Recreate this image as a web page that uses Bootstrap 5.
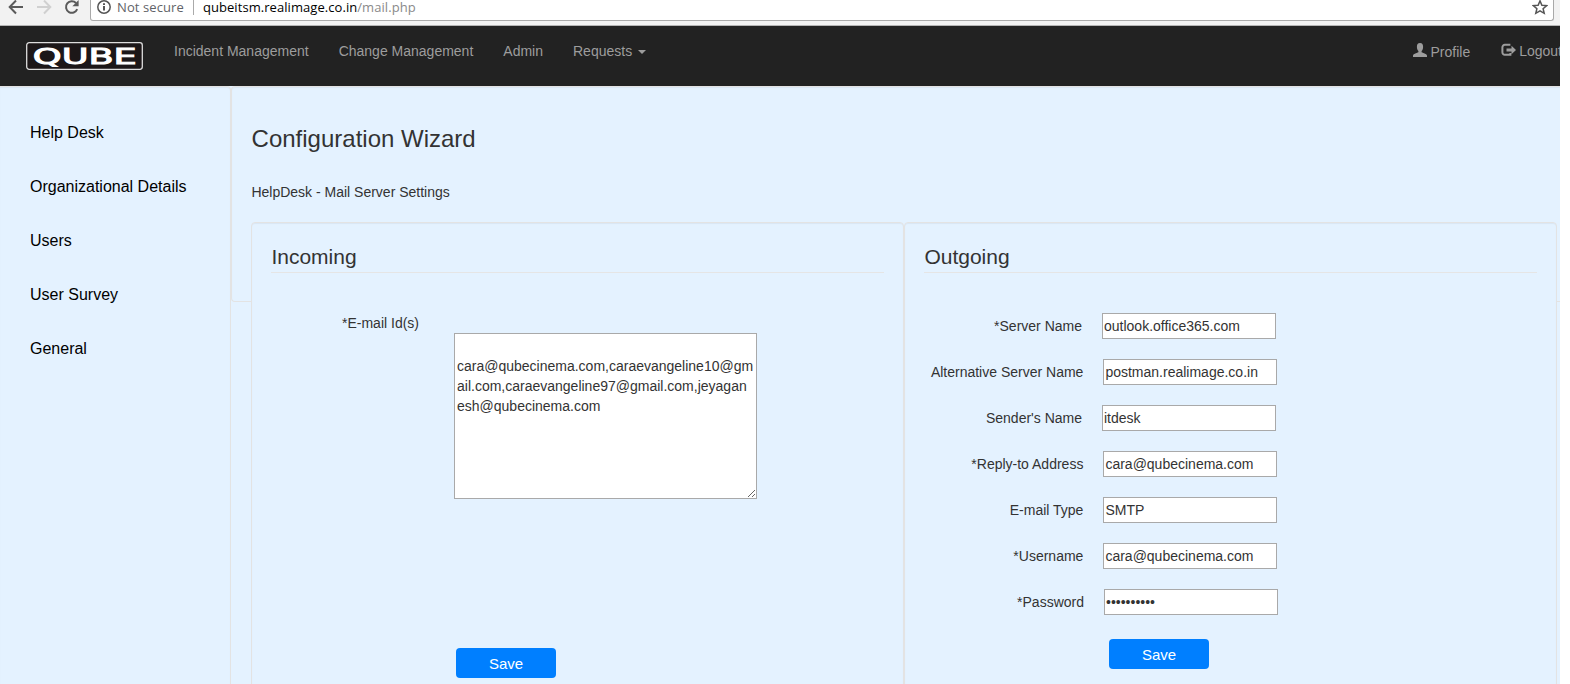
<!DOCTYPE html>
<html lang="en">
<head>
<meta charset="utf-8">
<title>Configuration Wizard</title>
<link rel="stylesheet" href="https://cdn.jsdelivr.net/npm/bootstrap@5.3.0/dist/css/bootstrap.min.css">
<style>
body{font-family:"Liberation Sans",Arial,sans-serif;font-size:14px;line-height:20px;color:#333;background:#fff;overflow:hidden}
.screen{width:1560px;height:684px;background:#e4f2ff}
.browser{height:26px;background:#f2f2f2;border-bottom:1px solid #b5b5b5;font-family:"Open Sans","Noto Sans",sans-serif;font-size:13px}
.tools{width:90px;height:25px}
.omni{width:1464px;height:21px;border:1px solid #a9a9a9;border-top:0;border-radius:0 0 3px 3px;background:#fff;line-height:15px}
.secure{color:#5f6368;letter-spacing:.1px;margin-left:4px}
.sep{width:1px;height:15px;background:#aaa;margin:0 9px 0 9px}
.addr{color:#000;white-space:nowrap;letter-spacing:.06px}
.addr span{color:#8a8a8a}
.star{margin-right:5px}
.topnav{height:60px;background:#222;padding:0 0 0 26px;overflow:hidden}
.topnav .nav-link{color:#9d9d9d;padding:0;line-height:20px;white-space:nowrap}
.topnav .dropdown-toggle::after{border-top:4px solid;border-right:4px solid transparent;border-left:4px solid transparent;margin-left:6px;vertical-align:2px}
.left-nav{margin:15px 0 0 31px;gap:30px}
.right-nav{margin:16px -2px 0 0;gap:31px}
.pro svg{margin:1px 3px 0 0}
.out svg{margin:2px 3px 0 0}
.out{margin-top:-1px}
.side{width:231px;border:1px solid #e3e3e3;border-left:0;border-bottom:0;border-radius:0 4px 0 0;padding:36px 0 0 30px;box-shadow:inset 0 1px 1px rgba(0,0,0,.05)}
.side a{display:block;color:#000;text-decoration:none;font-size:16px;line-height:20px;margin-bottom:34px}
.panel{width:1340px;height:216px;border:1px solid #e3e3e3;border-right:0;border-radius:4px 0 0 4px;padding:0 0 0 19px;box-shadow:inset 0 1px 1px rgba(0,0,0,.05)}
.panel h3{font-size:24px;line-height:28px;margin:38px 0 0;font-weight:400;padding-left:.6px}
.sub{margin:29px 0 0;padding-left:.4px}
.boxes{margin-top:20px;width:1306px}
.box{width:653px;height:480px;flex:none;border:1px solid #e3e3e3;border-radius:4px;background:#e4f2ff;padding:19px;box-shadow:inset 0 1px 1px rgba(0,0,0,.05)}
.box h4{font-size:21px;line-height:30px;height:31px;border-bottom:1px solid #e5e5e5;margin:0;font-weight:400;padding-left:.4px}
.email{margin:40px 0 0 71px}
textarea{width:303px;height:166px;border:1px solid #a9a9a9;padding:2px 0 2px 2px;color:#333;line-height:20px;word-break:break-all;overflow:hidden;display:block;background:#fff}
.email+textarea{margin:0 0 0 183px}
.fields{margin-top:40px}
.field{height:26px;margin-bottom:20px;width:352px}
.field label{margin-right:20px;line-height:26px}
.field input{width:174px;height:26px;flex:none;border:1px solid #a9a9a9;padding:0 1px;color:#333;background:#fff}
.half{width:353.4px}
.last{width:354px}
.save{width:100px;height:30px;padding:0;border:0;border-radius:4px;background:#007fff;color:#fff;font-size:15px;line-height:31px}
.save:hover{background:#0074e8;color:#fff}
.save-in{margin:149px 0 0 185px}
.save-out{margin:24px 0 0 185px}
.field.last{margin-bottom:0}
</style>
</head>
<body>
<div class="screen d-flex flex-column overflow-hidden">
 <div class="browser d-flex flex-shrink-0">
  <div class="tools flex-shrink-0">
   <svg width="90" height="25" viewBox="0 0 90 25" fill="none" stroke-width="2">
    <path d="M23 7H10M16 .5 9.700 7 16 13.500" stroke="#5a5a5a"/>
    <path d="M37 7h13M44 .5 50.300 7 44 13.500" stroke="#d0d0d0"/>
    <path d="M77.200 9.200A5.800 5.800 0 1 1 76 3" stroke="#5a5a5a"/><path d="M78.600 0v6.200h-6.200z" fill="#5a5a5a"/>
   </svg>
  </div>
  <div class="omni d-flex flex-shrink-0">
   <svg class="ms-1" width="18" height="15" viewBox="0 0 18 15"><circle cx="9" cy="7" r="6.200" fill="none" stroke="#555" stroke-width="1.500"/><path d="M8.100 6h1.800v4.600H8.100zM8.100 3.200h1.800v1.700H8.100z" fill="#444"/></svg>
   <span class="secure">Not secure</span><span class="sep"></span>
   <span class="addr">qubeitsm.realimage.co.in<span>/mail.php</span></span>
   <svg class="ms-auto star" width="16" height="16" viewBox="0 0 16 16"><path d="m8 .9 1.900 4.300 4.800.4-3.600 3.100 1.100 4.600L8 10.800l-4.200 2.500 1.100-4.600-3.600-3.100 4.800-.4z" fill="none" stroke="#555" stroke-width="1.500"/></svg>
  </div>
 </div>
 <nav class="topnav d-flex flex-shrink-0">
  <svg class="flex-shrink-0 mt-3" width="117" height="28" viewBox="0 0 117 28">
   <rect x=".7" y=".7" width="115.600" height="26.600" rx="2.500" fill="#1c1718" stroke="#ddd" stroke-width="1.300"/>
   <text x="6.800" y="21.500" textLength="104" lengthAdjust="spacingAndGlyphs" font-family="DejaVu Sans" font-size="22" fill="#fff" stroke="#fff" stroke-width="1">QUBE</text>
  </svg>
  <div class="nav flex-nowrap left-nav">
   <a class="nav-link" href="#">Incident Management</a>
   <a class="nav-link" href="#">Change Management</a>
   <a class="nav-link" href="#">Admin</a>
   <a class="nav-link dropdown-toggle" href="#">Requests</a>
  </div>
  <div class="nav flex-nowrap ms-auto right-nav">
   <a class="nav-link d-flex pro" href="#"><svg width="14" height="14" viewBox="0 0 14 14" fill="#9d9d9d"><path d="M7 0C4.700 0 3.900 1.600 3.900 3.700c0 1.800.5 3.300 1.500 4.300v1.300C3.500 10.300 0 11 0 12.800V14h14v-1.200c0-1.800-3.500-2.500-5.400-3.500V8c1-1 1.500-2.500 1.500-4.300C10.100 1.600 9.300 0 7 0z"/></svg>Profile</a>
   <a class="nav-link d-flex out" href="#"><svg width="15" height="14" viewBox="0 0 15 14"><path d="M9.400 1.800H4A2.400 2.400 0 0 0 1.400 4.200v5A2.400 2.400 0 0 0 4 11.800h5.400V10" fill="none" stroke="#9d9d9d" stroke-width="2"/><path d="M5.500 5.500h5V2.800L15 7 10.500 11.200V8.500h-5z" fill="#9d9d9d"/></svg>Logout</a>
  </div>
 </nav>
 <div class="d-flex flex-grow-1">
  <aside class="side flex-shrink-0">
   <a href="#">Help Desk</a><a href="#">Organizational Details</a><a href="#">Users</a><a href="#">User Survey</a><a href="#">General</a>
  </aside>
  <main class="panel flex-shrink-0">
   <h3>Configuration Wizard</h3>
   <p class="sub">HelpDesk - Mail Server Settings</p>
   <div class="boxes d-flex">
    <section class="box">
     <h4>Incoming</h4>
     <label class="email d-block">*E-mail Id(s)</label>
     <textarea>

cara@qubecinema.com,caraevangeline10@gm
ail.com,caraevangeline97@gmail.com,jeyagan
esh@qubecinema.com</textarea>
     <button class="btn save save-in d-block">Save</button>
    </section>
    <section class="box">
     <h4>Outgoing</h4>
     <form class="fields">
      <div class="field d-flex justify-content-end"><label>*Server Name</label><input value="outlook.office365.com"></div>
      <div class="field half d-flex justify-content-end"><label>Alternative Server Name</label><input value="postman.realimage.co.in"></div>
      <div class="field d-flex justify-content-end"><label>Sender's Name</label><input value="itdesk"></div>
      <div class="field half d-flex justify-content-end"><label>*Reply-to Address</label><input value="cara@qubecinema.com"></div>
      <div class="field half d-flex justify-content-end"><label>E-mail Type</label><input value="SMTP"></div>
      <div class="field half d-flex justify-content-end"><label>*Username</label><input value="cara@qubecinema.com"></div>
      <div class="field last d-flex justify-content-end"><label>*Password</label><input type="password" value="cinemaqube"></div>
      <button type="button" class="btn save save-out d-block">Save</button>
     </form>
    </section>
   </div>
  </main>
 </div>
</div>
<script src="https://cdn.jsdelivr.net/npm/bootstrap@5.3.0/dist/js/bootstrap.bundle.min.js"></script>
</body>
</html>
